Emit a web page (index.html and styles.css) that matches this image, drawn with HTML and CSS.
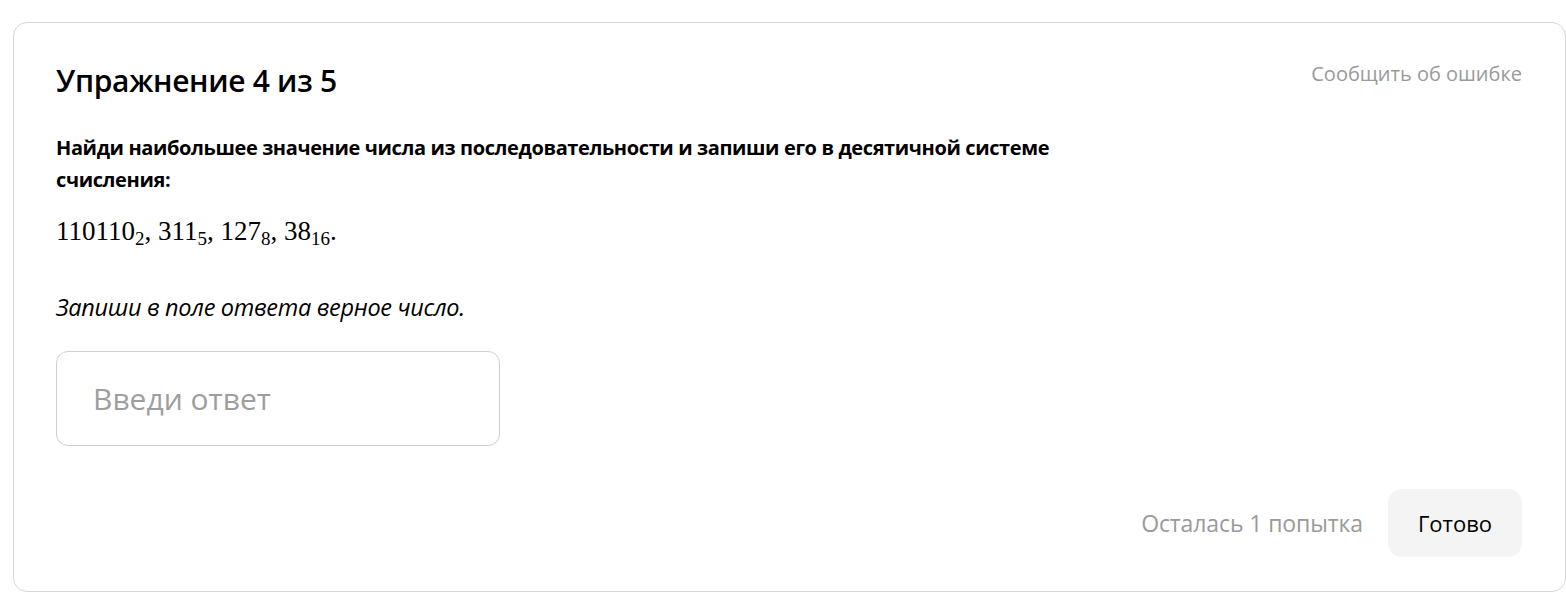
FILE: index.html
```html
<!DOCTYPE html>
<html>
<head>
	<meta charset="utf-8">
	<link rel="stylesheet" href="styles.css">
</head>
<body>
	<div class="card">
		<div class="head">
			<h1>Упражнение 4 из 5</h1>
			<a class="report">Сообщить об ошибке</a>
		</div>

		<p class="task">Найди наибольшее значение числа из последовательности и запиши его в десятичной системе счисления:</p>

		<p class="math">110110<sub>2</sub>, 311<sub>5</sub>, 127<sub>8</sub>, 38<sub>16</sub>.</p>

		<p class="hint">Запиши в поле ответа верное число.</p>

		<input class="answer" type="text" placeholder="Введи ответ">

		<div class="footer">
			<span class="tries">Осталась 1 попытка</span>
			<button class="done">Готово</button>
		</div>
	</div>
</body>
</html>
```

FILE: styles.css
```css
body {
	margin: 0;
	padding: 22px 0 0 13px;
	background: #fff;
	font-family: "Open Sans", "Noto Sans", sans-serif;
	color: #000;
}

.card {
	box-sizing: border-box;
	width: 1553px;
	height: 570px;
	border: 1px solid #d6d6d6;
	border-radius: 14px;
	padding: 34px 43px 0 42px;
	display: flex;
	flex-direction: column;
}

.head {
	display: flex;
	justify-content: space-between;
	align-items: flex-start;
}

h1 {
	margin: 4px 0 0;
	font-size: 30px;
	font-weight: 600;
	letter-spacing: -0.3px;
	line-height: 40px;
}

.report {
	margin-top: 2px;
	font-size: 20px;
	color: #9a9a9a;
	line-height: 30px;
}

.task {
	margin: 31px 0 0;
	max-width: 1010px;
	font-size: 20px;
	font-weight: 700;
	line-height: 32px;
	letter-spacing: -0.38px;
}

.math {
	margin: 18px 0 0;
	font-family: "Liberation Serif", "DejaVu Serif", serif;
	font-size: 27px;
	line-height: 34px;
}

.math sub {
	font-size: 19px;
	vertical-align: -5px;
	line-height: 0;
}

.hint {
	margin: 43px 0 0;
	font-size: 23.5px;
	font-style: italic;
	line-height: 32px;
	letter-spacing: -0.3px;
}

.answer {
	box-sizing: border-box;
	margin-top: 28px;
	width: 444px;
	height: 95px;
	border: 1px solid #cfcfcf;
	border-radius: 12px;
	padding: 0 36px;
	font-family: inherit;
	font-size: 30px;
	color: #000;
	outline: none;
}

.answer::placeholder {
	color: #9e9e9e;
}

.footer {
	margin-top: 43px;
	display: flex;
	justify-content: flex-end;
	align-items: center;
	gap: 25px;
}

.tries {
	font-size: 23px;
	color: #9a9a9a;
	letter-spacing: -0.1px;
}

.done {
	width: 134px;
	height: 68px;
	border: none;
	border-radius: 14px;
	background: #f4f4f4;
	font-family: inherit;
	font-size: 22px;
	color: #000;
}
```
